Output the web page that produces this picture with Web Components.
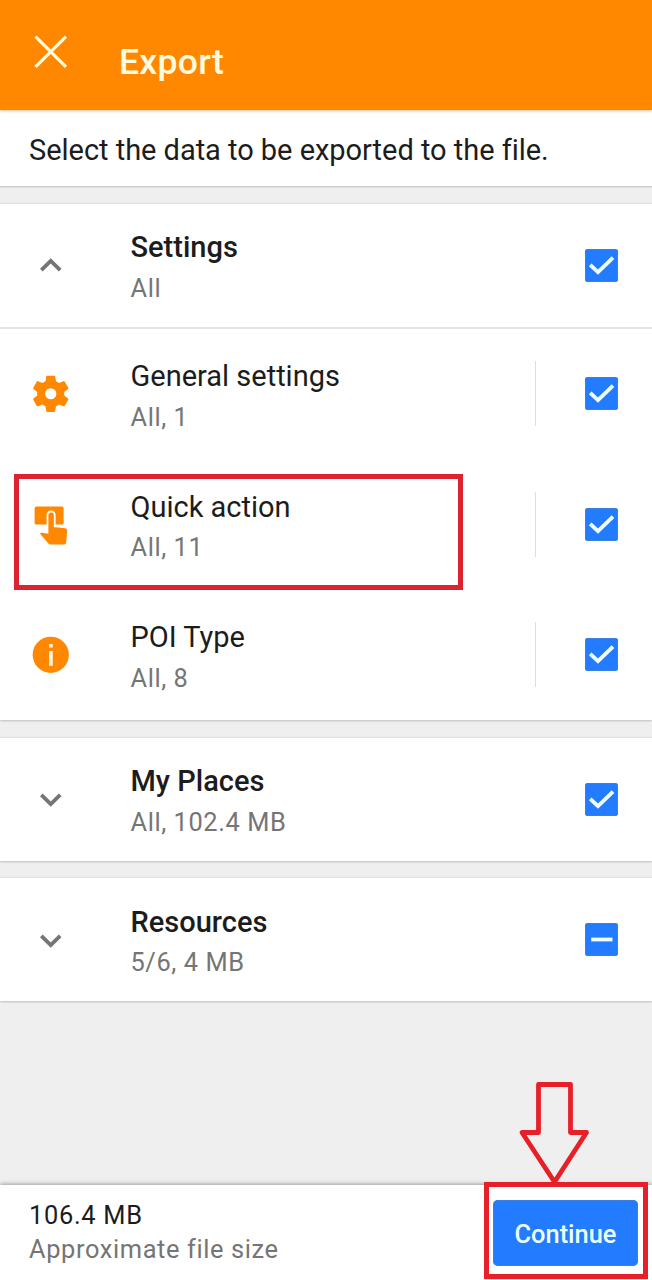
<!DOCTYPE html>
<html lang="en">
<head>
<meta charset="utf-8">
<title>Export</title>
<style>
  html, body { margin: 0; height: 100%; }
  body { background: #efefef; font-family: Roboto, "Liberation Sans", sans-serif; color: #1c1c1c; overflow: hidden; }
</style>
</head>
<body>
<export-screen></export-screen>
<script>
const define = (name, html, setup) => customElements.define(name, class extends HTMLElement {
  constructor() {
    super();
    this.attachShadow({ mode: "open" }).innerHTML = html;
  }
  connectedCallback() { if (setup) setup(this, this.shadowRoot); }
});

const ICONS = {
  close: '<path d="M3.600 3.600 20.400 20.400M20.400 3.600 3.600 20.400" fill="none" stroke="currentColor" stroke-width="1.75"/>',
  up: '<path d="M6.8 15 12 9.900l5.200 5.100" fill="none" stroke="currentColor" stroke-width="2.100"/>',
  down: '<path d="M6.800 9.900 12 15l5.200-5.100" fill="none" stroke="currentColor" stroke-width="2.100"/>',
  gear: '<path fill="currentColor" fill-rule="evenodd" d="M19.43 12.98c.04-.32.07-.64.07-.98s-.03-.66-.07-.98l2.11-1.65c.19-.15.24-.42.12-.64l-2-3.46c-.12-.22-.39-.3-.61-.22l-2.49 1c-.52-.4-1.08-.73-1.69-.98l-.38-2.65C14.46 2.18 14.25 2 14 2h-4c-.25 0-.46.18-.49.42l-.38 2.65c-.61.25-1.17.59-1.69.98l-2.49-1c-.23-.09-.49 0-.61.22l-2 3.46c-.13.22-.07.49.12.64l2.11 1.65c-.04.32-.07.65-.07.98s.03.66.07.98l-2.11 1.65c-.19.15-.24.42-.12.64l2 3.46c.12.22.39.3.61.22l2.49-1c.52.4 1.08.73 1.69.98l.38 2.65c.03.24.24.42.49.42h4c.25 0 .46-.18.49-.42l.38-2.65c.61-.25 1.17-.59 1.69-.98l2.49 1c.23.09.49 0 .61-.22l2-3.46c.12-.22.07-.49-.12-.64zM12 15.100a3.100 3.100 0 1 1 0-6.200 3.100 3.100 0 0 1 0 6.200z"/>',
  tap: '<path fill="currentColor" d="M4 1.900h14.200a.9.9 0 0 1 .9.900v8.200a.9.900 0 0 1-.9.900h-3.500V6.600a2.500 2.500 0 0 0-5 0v5.300H4a.9.900 0 0 1-.9-.9V2.800a.9.900 0 0 1 .9-.9z"/><path fill="currentColor" d="M12.200 5.200a1.500 1.500 0 0 1 1.500 1.500v6.700h1l5.200.500c.8.100 1.300.7 1.200 1.500l-.6 6.500c-.1.600-.5 1-1.100 1h-7.600c-.4 0-.8-.1-1.100-.5L6.100 17l.3-.4c.2-.2.5-.3.800-.2l3.500.6V6.700a1.500 1.500 0 0 1 1.500-1.500z"/>',
  info: '<circle cx="12" cy="12" r="10" fill="currentColor"/><path d="M11.100 6h2v2h-2zM11.100 9.900h2V18h-2z" fill="#fff8e0"/>'
};

define("line-icon", `<style>
  :host { display: block; width: 43.5px; height: 43.5px; flex: none; }
  svg { display: block; width: 100%; height: 100%; }
</style><svg viewBox="0 0 24 24" aria-hidden="true"></svg>`,
  (el, root) => { root.querySelector("svg").innerHTML = ICONS[el.getAttribute("name")]; });

define("check-box", `<style>
  :host { display: block; width: 33px; height: 33px; flex: none; border-radius: 3px; background: #237bff; box-shadow: inset 0 0 0 1px #3d7fdc; }
  svg { display: block; }
  path { fill: none; stroke: #f1ffff; stroke-width: 3.800; }
</style><svg width="33" height="33" viewBox="0 0 33 33"><path/></svg>`,
  (el, root) => root.querySelector("path").setAttribute("d",
    el.hasAttribute("partial") ? "M6.200 16.500H27.500" : "M5.200 15.800 13 23.200 28 8.700"));

define("app-bar", `<style>
  :host { display: flex; height: 110px; box-sizing: border-box; background: #ff8800; color: #fffbe0; padding: 0 29px; box-shadow: 0 1px 3px #d8c39a; position: relative; }
  line-icon { margin-top: 30px; }
  h1 { margin: 41px 0 0 46.500px; font: 500 35.500px/42px Roboto, sans-serif; letter-spacing: .3px; }
</style><line-icon name="close"></line-icon><h1><slot></slot></h1>`);

define("intro-text", `<style>
  :host { display: block; height: 77px; box-sizing: border-box; padding: 23px 29px 0; background: #fff; font-size: 29px; line-height: 34px; letter-spacing: -.03px; white-space: nowrap; border-bottom: 1px solid #cfcfcf; box-shadow: 0 1px 1px #e0e0e0; }
</style><slot></slot>`);

define("option-group", `<style>
  :host { display: block; box-sizing: border-box; background: #fff; box-shadow: 0 1px 2px #bdbdbd, 0 -1px 1px #e3e3e3; }
</style><slot></slot>`);

define("option-row", `<style>
  :host { display: flex; align-items: center; box-sizing: border-box; height: 130.5px; padding: 0 34px 0 29px; color: #ff8800; }
  :host([heading]) { height: 123px; color: #757575; }
  :host([open]) { height: 125px; border-bottom: 2px solid #e4e4e4; }
  .texts { flex: 1; margin-left: 58px; padding-top: 3px; }
  .title { font-size: 29px; line-height: 34px; color: #1c1c1c; white-space: nowrap; }
  :host([heading]) .title { font-weight: 500; }
  .sub { margin-top: 8.500px; font-size: 25.400px; line-height: 30px; color: #757575; letter-spacing: .58px; white-space: nowrap; }
  .rule { width: 1px; height: 65px; background: #dedede; margin-right: 49px; }
  :host([heading]) .rule { display: none; }
</style>
<div class="icon"></div>
<div class="texts"><div class="title"><slot></slot></div><div class="sub"><slot name="sub"></slot></div></div>
<div class="rule"></div>`,
  (el, root) => {
    const icon = document.createElement("line-icon");
    icon.setAttribute("name", el.getAttribute("icon"));
    root.querySelector(".icon").replaceChildren(icon);
    const box = document.createElement("check-box");
    box.toggleAttribute("partial", el.hasAttribute("partial"));
    root.append(box);
  });

define("size-bar", `<style>
  :host { display: flex; justify-content: space-between; box-sizing: border-box; height: 95px; padding: 15px 14px 14px 29px; background: #fff; box-shadow: 0 -1px 4px #9a9a9a; }
  .size { font-size: 25.400px; line-height: 30px; letter-spacing: .7px; }
  .note { margin-top: 4px; font-size: 25.400px; line-height: 30px; letter-spacing: .62px; color: #757575; }
  button { width: 145px; height: 66px; padding: 1px 0 0; border: 0; border-radius: 5px; background: #237bff; box-shadow: inset 0 0 0 1px #3d7fdc; color: #ecffff; font: 500 25.400px/30px Roboto, sans-serif; }
</style>
<div><div class="size">106.4 MB</div><div class="note">Approximate file size</div></div>
<button>Continue</button>`);

define("highlight-box", `<style>
  :host { display: block; position: absolute; box-sizing: border-box; border: 5px solid #dc2430; }
</style>`);

define("down-arrow", `<style>
  :host { display: block; position: absolute; left: 518px; top: 1080px; }
  svg { display: block; }
</style><svg width="74" height="106" viewBox="0 0 74 106"><path d="M20.500 4.500h32v48h16L36.500 102 4 52.500h16.500z" fill="none" stroke="#e71f28" stroke-width="4.800" stroke-linejoin="round"/></svg>`);

define("export-screen", `<style>
  :host { display: flex; flex-direction: column; position: relative; width: 652px; height: 1280px; overflow: hidden; }
  .groups { display: flex; flex-direction: column; gap: 17.500px; padding-top: 16.500px; flex: 1; }
</style>
<app-bar>Export</app-bar>
<intro-text>Select the data to be exported to the file.</intro-text>
<div class="groups">
  <option-group>
    <option-row heading open icon="up">Settings<span slot="sub">All</span></option-row>
    <option-row icon="gear">General settings<span slot="sub">All, 1</span></option-row>
    <option-row icon="tap">Quick action<span slot="sub">All, 11</span></option-row>
    <option-row icon="info">POI Type<span slot="sub">All, 8</span></option-row>
  </option-group>
  <option-group>
    <option-row heading icon="down">My Places<span slot="sub">All, 102.4 MB</span></option-row>
  </option-group>
  <option-group>
    <option-row heading partial icon="down">Resources<span slot="sub">5/6, 4 MB</span></option-row>
  </option-group>
</div>
<size-bar></size-bar>
<highlight-box style="left:14px;top:474px;width:449px;height:116px"></highlight-box>
<highlight-box style="left:484px;top:1182px;width:164px;height:97px;border-color:#e71f28"></highlight-box>
<down-arrow></down-arrow>`);
</script>
</body>
</html>
